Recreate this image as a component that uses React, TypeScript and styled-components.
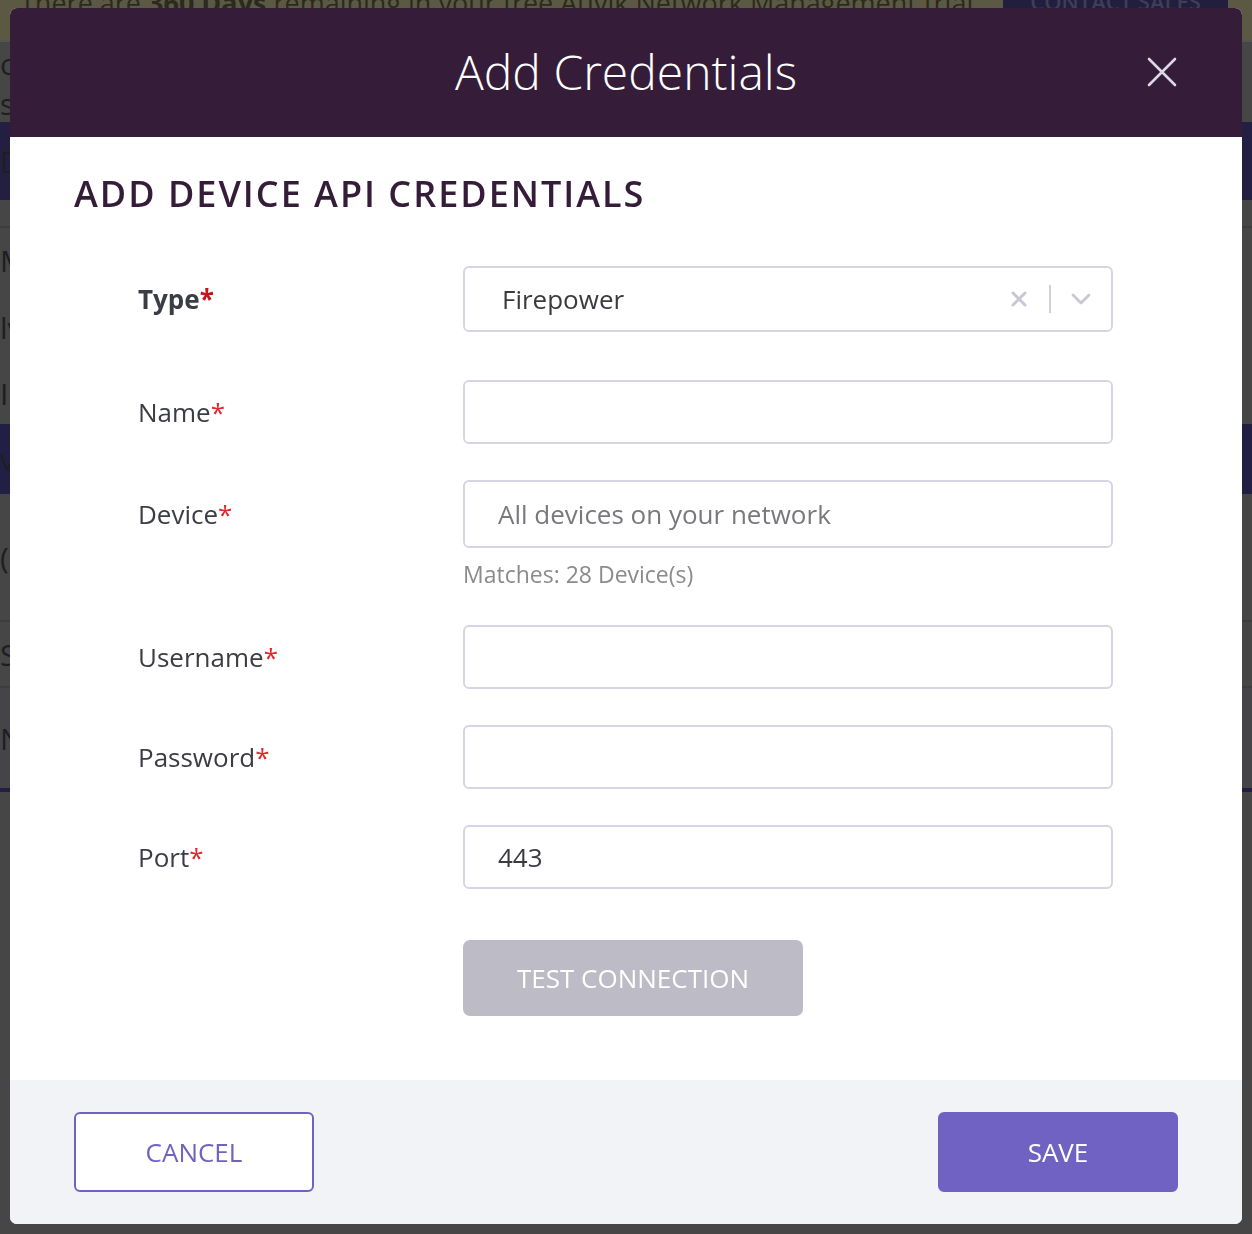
import React from "react";
import styled, { createGlobalStyle } from "styled-components";

const Global = createGlobalStyle`
  html, body { margin: 0; padding: 0; }
  body {
    font-family: "Open Sans", "Noto Sans", sans-serif;
    background: #464646;
    width: 1252px;
    height: 1234px;
    overflow: hidden;
  }
  * { box-sizing: border-box; }
`;

/* ---------- dimmed page behind the modal ---------- */
const Page = styled.div`
  display: flex;
  flex-direction: column;
  width: 1252px;
  height: 1234px;
  background: #464646;
  color: #1e1e22;
`;

const Banner = styled.div`
  height: 42px;
  background: #5b5944;
  border-bottom: 2px solid #545454;
  display: flex;
  align-items: flex-end;
  justify-content: space-between;
  padding: 0 24px 0 20px;
  font-size: 27px;
  color: #2b2a1c;
  overflow: hidden;
`;

const BannerText = styled.div`
  line-height: 30px;
  margin-bottom: 22px;
  white-space: nowrap;
  b { font-weight: 700; }
`;

const SalesButton = styled.div`
  align-self: stretch;
  width: 225px;
  background: #211e3e;
  color: #3f3d58;
  font-size: 22px;
  font-weight: 600;
  display: flex;
  align-items: flex-end;
  justify-content: center;
  padding-bottom: 28px;
  line-height: 1;
  margin-top: -20px;
`;

const PageRow = styled.div<{ $h: number; $bg?: string; $line?: boolean }>`
  height: ${(p) => p.$h}px;
  background: ${(p) => p.$bg || "#464646"};
  border-bottom: ${(p) => (p.$line ? "2px solid #3d3d3d" : "none")};
  font-size: 30px;
  color: #1e1e22;
  display: flex;
  align-items: center;
  justify-content: space-between;
  white-space: nowrap;
  overflow: hidden;
`;

/* ---------- modal ---------- */
const Overlay = styled.div`
  position: fixed;
  inset: 0;
  padding: 8px 10px 10px 10px;
  display: flex;
  justify-content: center;
`;

const Modal = styled.div`
  width: 1232px;
  height: 1216px;
  background: #ffffff;
  border-radius: 7px;
  overflow: hidden;
  display: flex;
  flex-direction: column;
`;

const Header = styled.div`
  height: 129px;
  background: #351d39;
  display: flex;
  align-items: center;
  justify-content: center;
  position: relative;
  flex-shrink: 0;
`;

const Title = styled.h1`
  margin: -2px 0 0 0;
  font-family: "Open Sans", sans-serif;
  font-weight: 300;
  font-size: 48px;
  color: #ffffff;
`;

const CloseButton = styled.button`
  position: absolute;
  right: 60px;
  top: 44px;
  width: 40px;
  height: 40px;
  padding: 0;
  border: 0;
  background: transparent;
  display: flex;
  align-items: center;
  justify-content: center;
  cursor: pointer;
`;

const Body = styled.div`
  flex: 1;
  padding: 34px 64px 0 64px;
  display: flex;
  flex-direction: column;
`;

const SectionTitle = styled.h2`
  margin: 0;
  font-family: "Open Sans", sans-serif;
  font-weight: 600;
  font-size: 36px;
  letter-spacing: 2px;
  line-height: 46px;
  color: #351d39;
  text-transform: uppercase;
`;

const Form = styled.div`
  display: grid;
  grid-template-columns: 325px 650px;
  padding-left: 64px;
  margin-top: 49px;
`;

const Label = styled.div<{ $bold?: boolean; $mt: number; $h?: number }>`
  font-size: 26px;
  font-weight: ${(p) => (p.$bold ? 700 : 400)};
  color: #3b3c44;
  height: ${(p) => p.$h || 64}px;
  display: flex;
  align-items: center;
  margin-top: ${(p) => p.$mt}px;
  span { color: ${(p) => (p.$bold ? "#c4151c" : "#e3262b")}; }
`;

const Field = styled.div<{ $mt: number }>`
  margin-top: ${(p) => p.$mt}px;
  display: flex;
  flex-direction: column;
`;

const InputBox = styled.div<{ $h?: number }>`
  height: ${(p) => p.$h || 64}px;
  border: 2px solid #d7d5e4;
  border-radius: 6px;
  display: flex;
  align-items: center;
  padding: 0 0 0 33px;
  font-size: 26px;
  color: #3a3a40;
  background: #fff;
`;

const SelectBox = styled(InputBox)`
  padding-left: 37px;
  justify-content: space-between;
`;

const Placeholder = styled.span`
  color: #78787e;
`;

const Indicators = styled.div`
  display: flex;
  align-items: center;
  height: 100%;
`;

const Indicator = styled.div`
  width: 60px;
  height: 100%;
  display: flex;
  align-items: center;
  justify-content: center;
`;

const Separator = styled.div`
  width: 2px;
  height: 28px;
  background: #d0d0d4;
`;

const Hint = styled.div`
  font-size: 23px;
  color: #8a8a90;
  margin-top: 11px;
  line-height: 30px;
`;

const TestButton = styled.button`
  grid-column: 2;
  margin-top: 51px;
  width: 340px;
  height: 76px;
  border: 0;
  border-radius: 7px;
  background: #bdbcc6;
  color: #ffffff;
  font-family: "Open Sans", sans-serif;
  font-size: 26px;
  text-transform: uppercase;
  cursor: not-allowed;
`;

const Footer = styled.div`
  height: 144px;
  background: #f2f3f7;
  display: flex;
  align-items: center;
  justify-content: space-between;
  padding: 0 64px;
  flex-shrink: 0;
`;

const FooterButton = styled.button<{ $primary?: boolean }>`
  width: 240px;
  height: 80px;
  border-radius: 6px;
  border: 2px solid #7062c2;
  background: ${(p) => (p.$primary ? "#7062c2" : "#ffffff")};
  color: ${(p) => (p.$primary ? "#ffffff" : "#7062c2")};
  font-family: "Open Sans", sans-serif;
  font-size: 26px;
  text-transform: uppercase;
  cursor: pointer;
`;

const Required = () => <span>*</span>;

export default function App() {
  return (
    <>
      <Global />
      <Page>
        <Banner>
          <BannerText>
            There are <b>360 Days</b> remaining in your free Auvik Network Management trial.
          </BannerText>
          <SalesButton>CONTACT SALES</SalesButton>
        </Banner>
        <PageRow $h={42}>or</PageRow>
        <PageRow $h={38}>s</PageRow>
        <PageRow $h={78} $bg="#221f42">D</PageRow>
        <PageRow $h={28} $line />
        <PageRow $h={64}>M</PageRow>
        <PageRow $h={70}>lv</PageRow>
        <PageRow $h={62}>I</PageRow>
        <PageRow $h={70} $bg="#221f44">v</PageRow>
        <PageRow $h={128} $line>(</PageRow>
        <PageRow $h={66} $line>S</PageRow>
        <PageRow $h={100} $bg="#444449">N</PageRow>
        <PageRow $h={4} $bg="#221f44" />
      </Page>

      <Overlay>
        <Modal role="dialog" aria-label="Add Credentials">
          <Header>
            <Title>Add Credentials</Title>
            <CloseButton aria-label="Close">
              <svg width="30" height="30" viewBox="0 0 30 30">
                <path d="M2 2 L28 28 M28 2 L2 28" stroke="#ddd8e6" strokeWidth="2.6" strokeLinecap="round" />
              </svg>
            </CloseButton>
          </Header>
          <Body>
            <SectionTitle>Add Device API Credentials</SectionTitle>
            <Form>
              <Label $bold $mt={0} $h={66}>
                Type<Required />
              </Label>
              <Field $mt={0}>
                <SelectBox $h={66}>
                  <span>Firepower</span>
                  <Indicators>
                    <Indicator>
                      <svg width="16" height="16" viewBox="0 0 16 16">
                        <path d="M2 2 L14 14 M14 2 L2 14" stroke="#c9c7d6" strokeWidth="3" strokeLinecap="round" />
                      </svg>
                    </Indicator>
                    <Separator />
                    <Indicator>
                      <svg width="20" height="12" viewBox="0 0 20 12">
                        <path d="M2 2 L10 10 L18 2" fill="none" stroke="#c9c7d6" strokeWidth="2.8" strokeLinecap="round" strokeLinejoin="round" />
                      </svg>
                    </Indicator>
                  </Indicators>
                </SelectBox>
              </Field>

              <Label $mt={48}>
                Name<Required />
              </Label>
              <Field $mt={48}>
                <InputBox />
              </Field>

              <Label $mt={36} $h={68}>
                Device<Required />
              </Label>
              <Field $mt={36}>
                <InputBox $h={68}>
                  <Placeholder>All devices on your network</Placeholder>
                </InputBox>
                <Hint>Matches: 28 Device(s)</Hint>
              </Field>

              <Label $mt={0} style={{ alignSelf: "end" }}>
                Username<Required />
              </Label>
              <Field $mt={36}>
                <InputBox />
              </Field>

              <Label $mt={36}>
                Password<Required />
              </Label>
              <Field $mt={36}>
                <InputBox />
              </Field>

              <Label $mt={36}>
                Port<Required />
              </Label>
              <Field $mt={36}>
                <InputBox>443</InputBox>
              </Field>

              <TestButton disabled>Test Connection</TestButton>
            </Form>
          </Body>
          <Footer>
            <FooterButton>Cancel</FooterButton>
            <FooterButton $primary>Save</FooterButton>
          </Footer>
        </Modal>
      </Overlay>
    </>
  );
}
